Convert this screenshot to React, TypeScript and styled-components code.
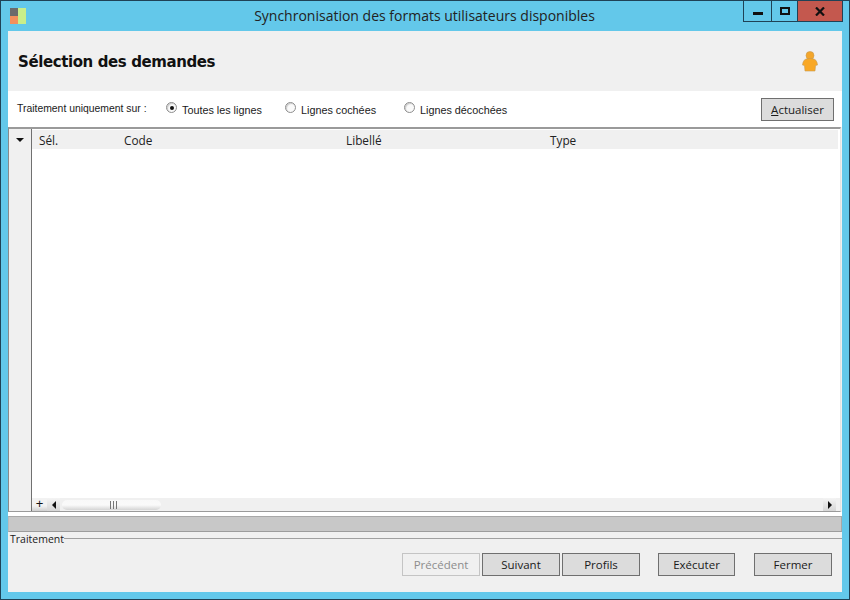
import React from "react";
import styled, { createGlobalStyle } from "styled-components";

const Global = createGlobalStyle`
  html, body { margin: 0; padding: 0; background: #63c8ea; }
  * { box-sizing: border-box; }
`;

const Win = styled.div`
  width: 850px; height: 600px; display: flex; flex-direction: column;
  background: #63c8ea; border: 1px solid #1f4256; padding: 0 7px 7px 7px;
  font-family: "Open Sans", "Noto Sans", sans-serif; color: #1a1a1a; overflow: hidden;
`;
const TitleBar = styled.div`
  height: 30px; flex: none; display: flex; align-items: flex-start;
`;
const AppIcon = styled.svg`
  width: 16px; height: 16px; margin: 7px 0 0 2px; flex: none;
`;
const Title = styled.div`
  flex: 1; text-align: center; font-size: 14px; line-height: 30px; padding-left: 80px; color: #222;
`;
const Caption = styled.div`
  display: flex; height: 21px; flex: none; margin-right: -1px; border: 1px solid #1f4256; border-top: none;
`;
const CapBtn = styled.div<{ $w: number; $close?: boolean }>`
  width: ${(p) => p.$w}px; display: flex; align-items: center; justify-content: center;
  background: ${(p) => (p.$close ? "#c4584e" : "transparent")};
  & + & { border-left: 1px solid #1f4256; }
`;
const Client = styled.div`
  flex: 1; display: flex; flex-direction: column; background: #f0f0f0; min-height: 0;
`;
const Header = styled.div`
  height: 60px; flex: none; display: flex; align-items: center; justify-content: space-between;
  padding: 0 24px 0 10px; background: #f0f0f0;
`;
const Heading = styled.h1`
  margin: 2px 0 0; font-family: "DejaVu Sans", sans-serif; font-size: 15px; font-weight: 700; color: #111; letter-spacing: -0.4px;
`;
const Options = styled.div`
  height: 36px; flex: none; background: #fff; display: flex; align-items: center; padding: 0 8px 0 9px;
  font-family: "Liberation Sans", sans-serif; font-size: 10.8px;
`;
const OptLabel = styled.span`
  width: 149px; flex: none; margin-top: -1px; font-size: 10.4px;
`;
const Radio = styled.label<{ $w: number }>`
  width: ${(p) => p.$w}px; flex: none; display: flex; align-items: center; gap: 5px; margin-top: 2px;
`;
const RadioDot = styled.span<{ $on?: boolean }>`
  width: 11px; height: 11px; border-radius: 50%; flex: none; margin-top: -5px; display: flex;
  align-items: center; justify-content: center;
  border: 1px solid #8e8e8e; background: #fafafa;
  box-shadow: inset 1px 1px 1px #ccc;
  &::after { content: ""; width: 4px; height: 4px; border-radius: 50%; background: ${(p) => (p.$on ? "#111" : "transparent")}; }
`;
const Spacer = styled.div`flex: 1;`;
const Btn = styled.button<{ $w: number; $off?: boolean; $mr?: number }>`
  width: ${(p) => p.$w}px; height: 23px; flex: none; padding: 0; font-family: "Open Sans", sans-serif; font-size: 11.5px;
  margin-right: ${(p) => p.$mr ?? 0}px;
  background: ${(p) => (p.$off ? "#f0f0f0" : "#dcdcdc")};
  border: 1px solid ${(p) => (p.$off ? "#c4c4c4" : "#6f6f6f")};
  color: ${(p) => (p.$off ? "#8d8d8d" : "#1a1a1a")};
  u { text-decoration: underline; }
`;
const Grid = styled.div`
  height: 385px; flex: none; display: flex; background: #fff; margin-right: 1px;
  border-top: 2px solid #9a9a9a; border-left: 1px solid #8a8a8a; border-bottom: 1px solid #9a9a9a;
  border-right: 1px solid #e4e4e4;
`;
const Gutter = styled.div`
  width: 23px; flex: none; background: #f0f0f0; border-right: 1px solid #707070;
  display: flex; flex-direction: column; align-items: center; padding-top: 9px;
`;
const Arrow = styled.div`
  width: 0; height: 0; border-left: 4px solid transparent; border-right: 4px solid transparent; border-top: 4px solid #111;
`;
const GridBody = styled.div`
  flex: 1; display: flex; flex-direction: column; min-width: 0; padding-top: 1px;
`;
const ColHead = styled.div`
  height: 19px; flex: none; margin-right: 2px; background: #f0f0f0; display: grid; padding-top: 1px;
  grid-template-columns: 85px 222px 204px 1fr; padding-left: 7px; align-items: center; font-size: 11.8px; color: #222;
`;
const Rows = styled.div`flex: 1;`;
const HScroll = styled.div`
  height: 13px; flex: none; display: flex; align-items: center; background: #f0f0f0;
`;
const Plus = styled.div`
  width: 15px; height: 13px; flex: none; text-align: center; font-size: 13px; line-height: 12px; color: #111;
  font-family: "Liberation Sans", sans-serif; background: linear-gradient(#f2f2f2 60%, #cfcfcf);
`;
const ScrollBtn = styled.div`
  width: 13px; height: 13px; flex: none; display: flex; align-items: center; justify-content: center;
  background: linear-gradient(#f4f4f4, #d6d6d6);
`;
const Tri = styled.div<{ $right?: boolean }>`
  width: 0; height: 0; border-top: 4px solid transparent; border-bottom: 4px solid transparent;
  ${(p) => (p.$right ? "border-left: 4px solid #111;" : "border-right: 4px solid #111;")}
`;
const Track = styled.div`flex: 1; height: 13px; display: flex; align-items: center; padding-left: 2px;`;
const Thumb = styled.div`
  width: 99px; height: 10px; border-radius: 5px; display: flex; align-items: center; justify-content: center; gap: 2px;
  padding-left: 3px;
  background: linear-gradient(#f8f8f8, #fafafa 50%, #d4d4d4);
  i { width: 1px; height: 8px; background: #777; }
`;
const EndPad = styled.div`width: 4px; height: 13px; flex: none;`;
const Gap = styled.div`height: 4px; flex: none; background: #fff;`;
const Progress = styled.div`
  height: 16px; flex: none; background: #c8c8c8; border-top: 1px solid #a8a8a8; border-bottom: 1px solid #9c9c9c; border-left: 1px solid #bbb; border-right: 1px solid #a8a8a8;
`;
const Group = styled.div`flex: 1; display: flex; flex-direction: column; min-height: 0;`;
const GroupHead = styled.div`
  display: flex; align-items: center; height: 14px; font-size: 10.5px; padding-left: 2px; flex: none;
  &::after { content: ""; flex: 1; height: 1px; background: #a0a0a0; margin-top: -2px; }
`;
const Footer = styled.div`
  display: flex; justify-content: flex-end; padding: 7px 10px 0 0;
`;

export default function App() {
  return (
    <Win>
      <Global />
      <TitleBar>
        <AppIcon viewBox="0 0 16 16">
          <rect x="0" y="0" width="8" height="8" fill="#6b6b6b" />
          <rect x="0" y="8" width="8" height="8" fill="#f2905c" />
          <rect x="8" y="0" width="8" height="16" fill="#c9ee8a" />
        </AppIcon>
        <Title>Synchronisation des formats utilisateurs disponibles</Title>
        <Caption>
          <CapBtn $w={27}>
            <svg width="10" height="10" viewBox="0 0 10 10"><rect x="0" y="6" width="10" height="3" fill="#111" /></svg>
          </CapBtn>
          <CapBtn $w={26}>
            <svg width="10" height="8" viewBox="0 0 10 8"><rect x="1" y="1" width="8" height="6" fill="none" stroke="#111" strokeWidth="2" /></svg>
          </CapBtn>
          <CapBtn $w={45} $close>
            <svg width="10" height="9" viewBox="0 0 10 9"><path d="M1 0.5 L9 8.5 M9 0.5 L1 8.5" stroke="#111" strokeWidth="2.2" fill="none" /></svg>
          </CapBtn>
        </Caption>
      </TitleBar>
      <Client>
        <Header>
          <Heading>Sélection des demandes</Heading>
          <svg width="16" height="21" viewBox="0 0 16 21">
            <circle cx="8" cy="4.5" r="4" fill="#f4a62a" stroke="#c89a50" strokeWidth="0.6" />
            <path d="M4 8 Q8 7 12 8 Q14.5 9 15 11.5 L15.5 14 L13.5 14.5 L13 20 H3 L2.5 14.5 L0.5 14 L1 11.5 Q1.5 9 4 8 Z" fill="#f9a825" stroke="#c89a50" strokeWidth="0.6" />
          </svg>
        </Header>
        <Options>
          <OptLabel>Traitement uniquement sur :</OptLabel>
          <Radio $w={119}><RadioDot $on />Toutes les lignes</Radio>
          <Radio $w={119}><RadioDot />Lignes cochées</Radio>
          <Radio $w={119}><RadioDot />Lignes décochées</Radio>
          <Spacer />
          <Btn $w={73}><u>A</u>ctualiser</Btn>
        </Options>
        <Grid>
          <Gutter><Arrow /></Gutter>
          <GridBody>
            <ColHead>
              <span>Sél.</span>
              <span>Code</span>
              <span>Libellé</span>
              <span>Type</span>
            </ColHead>
            <Rows />
            <HScroll>
              <Plus>+</Plus>
              <ScrollBtn><Tri /></ScrollBtn>
              <Track>
                <Thumb><i /><i /><i /></Thumb>
              </Track>
              <ScrollBtn><Tri $right /></ScrollBtn>
              <EndPad />
            </HScroll>
          </GridBody>
        </Grid>
        <Gap />
        <Progress />
        <Group>
          <GroupHead>Traitement</GroupHead>
          <Footer>
            <Btn $w={78} $off $mr={2}>Précédent</Btn>
            <Btn $w={78} $mr={2}>Suivant</Btn>
            <Btn $w={78} $mr={18}>Profils</Btn>
            <Btn $w={77} $mr={19}>Exécuter</Btn>
            <Btn $w={78}>Fermer</Btn>
          </Footer>
        </Group>
      </Client>
    </Win>
  );
}
